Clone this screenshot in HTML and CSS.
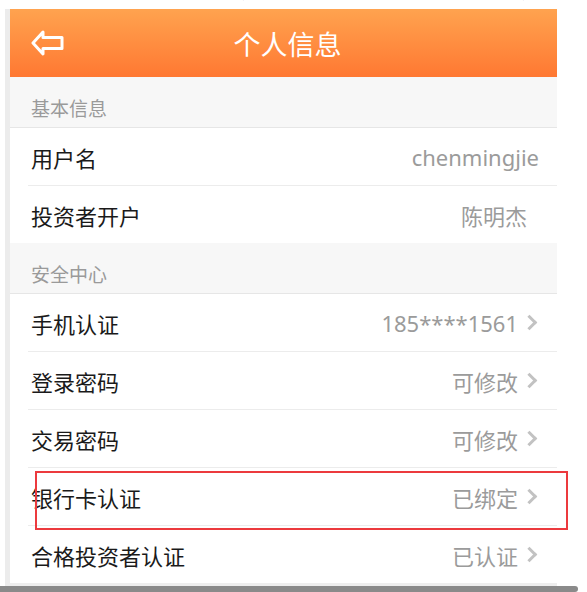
FILE: index.html
```html
<!DOCTYPE html>
<html lang="zh-CN">
<head>
  <meta charset="UTF-8" />
  <title>个人信息</title>
  <link rel="stylesheet" href="styles.css">
</head>
<body>
  <div class="topClip">
    <div class="topClipText">若需要修改请联系客服，投资者信息认证后可进行交易，请确保信息真实有效以便核对</div>
  </div>

  <div class="phone">
    <!-- Header -->
    <div class="header">
      <svg class="backIcon" width="34" height="28" viewBox="0 0 34 28">
        <path d="M12 2 L2 13 L12 24 V18.5 H31 V7.5 H12 Z" fill="none" stroke="#fff" stroke-width="3" stroke-linejoin="round" stroke-linecap="round"/>
      </svg>
      <div class="title">个人信息</div>
    </div>

    <!-- Basic info -->
    <div class="sectionHead">基本信息</div>
    <div class="row">
      <span class="label">用户名</span>
      <span class="value">chenmingjie</span>
    </div>
    <div class="row last">
      <span class="label">投资者开户</span>
      <span class="value valueName">陈明杰</span>
    </div>

    <!-- Security -->
    <div class="sectionHead">安全中心</div>
    <div class="row">
      <span class="label">手机认证</span>
      <span class="value">185****1561</span>
      <span class="chevron"></span>
    </div>
    <div class="row">
      <span class="label">登录密码</span>
      <span class="value">可修改</span>
      <span class="chevron"></span>
    </div>
    <div class="row">
      <span class="label">交易密码</span>
      <span class="value">可修改</span>
      <span class="chevron"></span>
    </div>
    <div class="row">
      <span class="label">银行卡认证</span>
      <span class="value">已绑定</span>
      <span class="chevron"></span>
    </div>
    <div class="row last">
      <span class="label">合格投资者认证</span>
      <span class="value">已认证</span>
      <span class="chevron"></span>
    </div>
    <div class="phoneFoot"></div>
  </div>

  <div class="scrollBar"></div>

  <!-- annotation box -->
  <div class="highlight"></div>
</body>
</html>
```

FILE: styles.css
```css
body {
  margin: 0;
  background: #fff;
  font-family: "Noto Sans", "Noto Sans CJK SC", sans-serif;
  position: relative;
  height: 592px;
  overflow: hidden;
}
.topClip {
  height: 3px;
  margin-bottom: 6px;
  overflow: hidden;
}
.topClipText {
  margin-top: -19px;
  padding-left: 40px;
  font-size: 20px;
  line-height: 20px;
  color: #666;
  white-space: nowrap;
}
.phone {
  margin-left: 5px;
  width: 552px;
  border-left: 5px solid #ececec;
  box-sizing: border-box;
  background: #fff;
}
.header {
  height: 68px;
  background: linear-gradient(to bottom, #ffa34f, #ff7832);
  display: flex;
  align-items: center;
  position: relative;
}
.backIcon {
  margin-left: 21px;
  margin-top: 2px;
}
.title {
  position: absolute;
  left: 0;
  right: 0;
  text-align: center;
  color: #fff;
  font-size: 27px;
  padding-left: 8px;
}
.sectionHead {
  height: 51px;
  box-sizing: border-box;
  background: #f7f7f7;
  border-bottom: 1px solid #e6e6e6;
  display: flex;
  align-items: flex-end;
  padding: 0 0 7px 21px;
  font-size: 19px;
  line-height: 22px;
  color: #9a9a9a;
}
.row {
  height: 58px;
  box-sizing: border-box;
  margin-left: 18px;
  padding-right: 18px;
  border-bottom: 1px solid #ececec;
  display: flex;
  align-items: center;
}
.row.last {
  border-bottom: none;
  height: 57px;
}
.label {
  flex: 1;
  padding-left: 3px;
  font-size: 22px;
  color: #1a1a1a;
}
.value {
  font-size: 22px;
  color: #9b9b9b;
}
.valueName {
  margin-right: 12px;
}
.chevron {
  width: 8px;
  height: 8px;
  border-top: 3px solid #c2c2c2;
  border-right: 3px solid #c2c2c2;
  transform: rotate(45deg);
  margin-left: 6px;
  margin-right: 4px;
}
.phoneFoot {
  height: 3px;
  background: #eeeeee;
}
.scrollBar {
  width: 578px;
  height: 6px;
  background: #8a8a8a;
  border-radius: 0 4px 4px 0;
}
.highlight {
  position: absolute;
  left: 35px;
  top: 471px;
  width: 529px;
  height: 55px;
  border: 2px solid #ec3a3e;
}
```
